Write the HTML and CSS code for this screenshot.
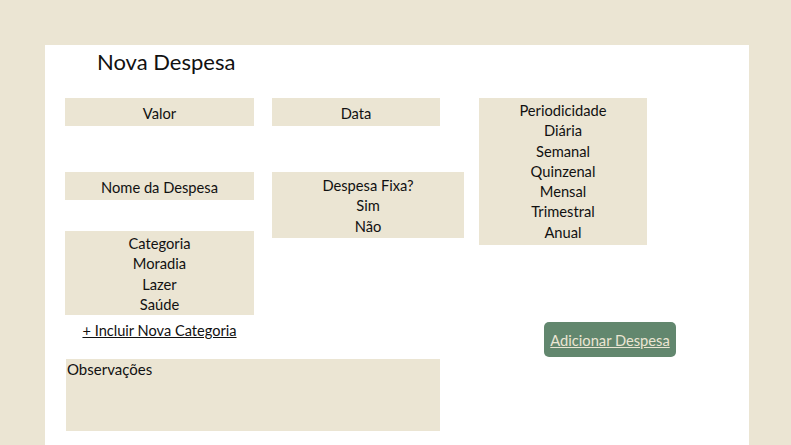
FILE: index.html
```html
<!DOCTYPE html>
<html lang="pt">
<head>
<meta charset="utf-8">
<title>Nova Despesa</title>
<link rel="stylesheet" href="styles.css">
</head>
<body>
<main class="card">
  <h1 class="title">Nova Despesa</h1>
  <div class="form">
    <div class="col col1">
      <div class="field single">Valor</div>
      <div class="field single gap-a">Nome da Despesa</div>
      <div class="field list categoria">
        <div>Categoria</div>
        <div>Moradia</div>
        <div>Lazer</div>
        <div>Saúde</div>
      </div>
      <a class="link" href="#">+ Incluir Nova Categoria</a>
    </div>
    <div class="col col2">
      <div class="field single data">Data</div>
      <div class="field list fixa">
        <div>Despesa Fixa?</div>
        <div>Sim</div>
        <div>Não</div>
      </div>
    </div>
    <div class="col col3">
      <div class="field list periodo">
        <div>Periodicidade</div>
        <div>Diária</div>
        <div>Semanal</div>
        <div>Quinzenal</div>
        <div>Mensal</div>
        <div>Trimestral</div>
        <div>Anual</div>
      </div>
      <button class="btn" type="button">Adicionar Despesa</button>
    </div>
  </div>
  <div class="obs">Observações</div>
</main>
</body>
</html>
```
FILE: styles.css
```css
html, body {
  margin: 0;
  padding: 0;
}
body {
  background: #ebe5d3;
  font-family: "Lato", "Noto Sans", sans-serif;
  color: #111;
  height: 445px;
  overflow: hidden;
}
.card {
  background: #fff;
  margin: 45px 0 0 45px;
  width: 704px;
  height: 420px;
  padding: 0 0 0 20px;
  box-sizing: border-box;
}
.title {
  margin: 0 0 0 32px;
  padding-top: 4px;
  font-size: 22px;
  font-weight: 400;
  line-height: 26px;
  height: 49px;
}
.form {
  display: flex;
  align-items: flex-start;
}
.col {
  display: flex;
  flex-direction: column;
}
.col1 { width: 189px; }
.col2 { width: 192px; margin-left: 18px; }
.col3 { width: 168px; margin-left: 15px; }
.field {
  background: #ebe5d3;
  text-align: center;
  font-size: 14.7px;
  line-height: 20.3px;
}
.single {
  height: 28px;
  box-sizing: border-box;
  padding-top: 5px;
}
.gap-a { margin-top: 46px; }
.categoria {
  margin-top: 31px;
  height: 84px;
  box-sizing: border-box;
  padding-top: 2px;
}
.data { width: 168px; }
.fixa {
  margin-top: 46px;
  height: 66px;
  box-sizing: border-box;
  padding-top: 3px;
}
.periodo {
  height: 147px;
  box-sizing: border-box;
  padding-top: 2px;
}
.link {
  align-self: center;
  margin-top: 6px;
  font-size: 14.6px;
  line-height: 20px;
  color: #111;
  text-decoration: underline;
}
.btn {
  margin: 77px 0 0 65px;
  width: 132px;
  height: 35px;
  flex: none;
  background: #62876e;
  border: none;
  border-radius: 5px;
  color: #ebe5d3;
  font-family: inherit;
  font-size: 14.7px;
  text-decoration: underline;
  padding: 0;
  white-space: nowrap;
}
.obs {
  margin: 2px 0 0 1px;
  width: 374px;
  height: 72px;
  background: #ebe5d3;
  font-size: 15px;
  line-height: 20px;
  padding-left: 1px;
  box-sizing: border-box;
}
```
